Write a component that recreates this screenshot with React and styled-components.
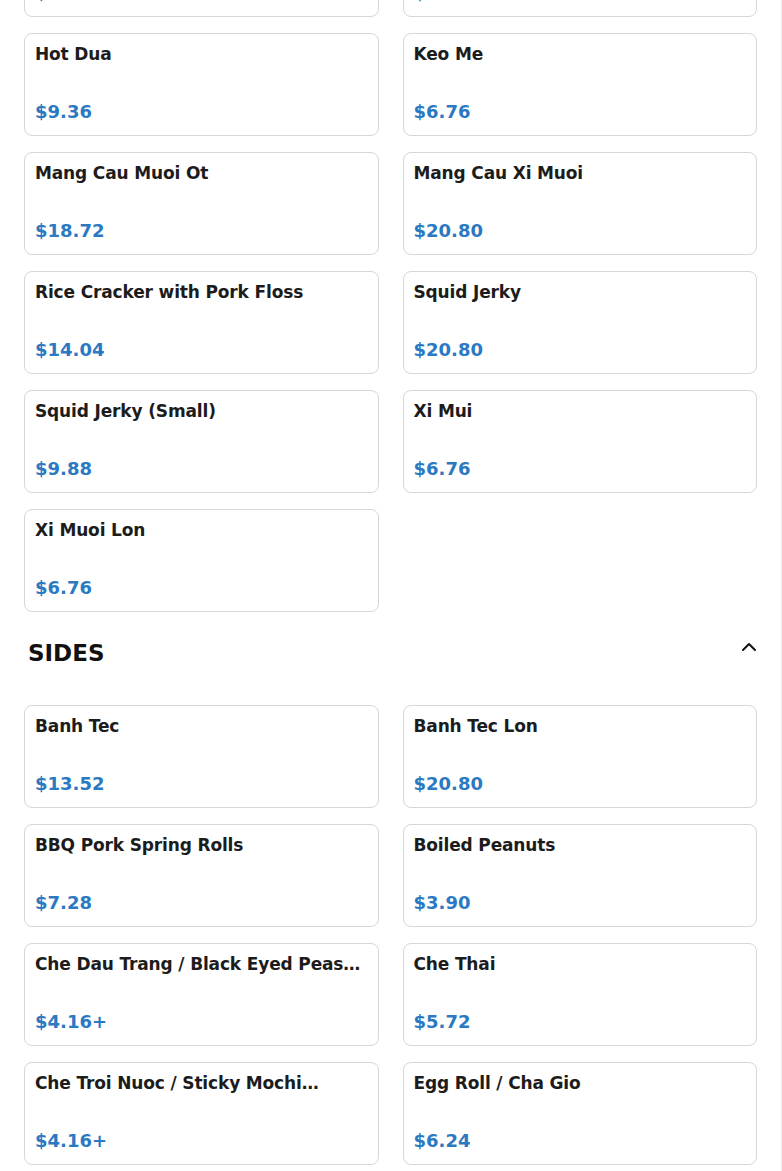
import styled, { createGlobalStyle } from 'styled-components';
import { ChevronUp } from 'lucide-react';

const GlobalStyle = createGlobalStyle`
  html, body {
    margin: 0;
    padding: 0;
    background: #ffffff;
  }
  body {
    font-family: "DejaVu Sans", "Liberation Sans", sans-serif;
    color: #1c1c1c;
  }
  * {
    box-sizing: border-box;
  }
`;

const StyledPage = styled.div`
  width: 782px;
  height: 1171px;
  overflow: hidden;
  border-right: 1px solid #ececec;
`;

const StyledMenu = styled.main`
  margin-top: -86px;
  padding: 0 24px;
`;

const StyledSection = styled.section`
  display: flex;
  flex-direction: column;
`;

const StyledSectionHeader = styled.header`
  display: flex;
  align-items: center;
  justify-content: space-between;
  padding: 15px 0 0 4px;
  margin: 0 -4px 38px 0;

  svg {
    color: #111;
    flex-shrink: 0;
  }
`;

const StyledSectionTitle = styled.h2`
  margin: 0;
  padding-top: 13px;
  font-size: 23px;
  line-height: 27px;
  font-weight: 700;
  color: #111;
`;

const StyledGrid = styled.div`
  display: grid;
  grid-template-columns: repeat(2, 1fr);
  column-gap: 24px;
  row-gap: 16px;
`;

const StyledCard = styled.article`
  height: 103px;
  display: flex;
  flex-direction: column;
  justify-content: space-between;
  padding: 9px 10px 12px;
  border: 1px solid #d6d6d6;
  border-radius: 8px;
  background: #fff;
  cursor: pointer;
`;

const StyledItemName = styled.h3`
  margin: 0;
  font-size: 17px;
  line-height: 22px;
  font-weight: 700;
  letter-spacing: -0.15px;
  color: #1c1c1c;
  display: -webkit-box;
  -webkit-line-clamp: 1;
  -webkit-box-orient: vertical;
  overflow: hidden;
`;

const StyledPrice = styled.span`
  font-size: 18px;
  line-height: 22px;
  font-weight: 700;
  color: #2b79c2;
`;

const sections = [
  {
    title: 'SNACKS',
    hideHeader: true,
    items: [
      { name: 'Ghe Rim', price: '$9.36' },
      { name: 'Kho Bo', price: '$20.80' },
      { name: 'Hot Dua', price: '$9.36' },
      { name: 'Keo Me', price: '$6.76' },
      { name: 'Mang Cau Muoi Ot', price: '$18.72' },
      { name: 'Mang Cau Xi Muoi', price: '$20.80' },
      { name: 'Rice Cracker with Pork Floss', price: '$14.04' },
      { name: 'Squid Jerky', price: '$20.80' },
      { name: 'Squid Jerky (Small)', price: '$9.88' },
      { name: 'Xi Mui', price: '$6.76' },
      { name: 'Xi Muoi Lon', price: '$6.76' },
    ],
  },
  {
    title: 'SIDES',
    items: [
      { name: 'Banh Tec', price: '$13.52' },
      { name: 'Banh Tec Lon', price: '$20.80' },
      { name: 'BBQ Pork Spring Rolls', price: '$7.28' },
      { name: 'Boiled Peanuts', price: '$3.90' },
      { name: 'Che Dau Trang / Black Eyed Peas Pudding', price: '$4.16+' },
      { name: 'Che Thai', price: '$5.72' },
      { name: 'Che Troi Nuoc / Sticky Mochi Dumplings', price: '$4.16+' },
      { name: 'Egg Roll / Cha Gio', price: '$6.24' },
    ],
  },
];

function MenuCard({ name, price }) {
  return (
    <StyledCard>
      <StyledItemName title={name}>{name}</StyledItemName>
      <StyledPrice>{price}</StyledPrice>
    </StyledCard>
  );
}

export default function App() {
  return (
    <StyledPage>
      <GlobalStyle />
      <StyledMenu>
        {sections.map((section) => (
          <StyledSection key={section.title}>
            {!section.hideHeader && (
              <StyledSectionHeader>
                <StyledSectionTitle>{section.title}</StyledSectionTitle>
                <ChevronUp size={24} strokeWidth={2} />
              </StyledSectionHeader>
            )}
            <StyledGrid>
              {section.items.map((item) => (
                <MenuCard key={item.name} name={item.name} price={item.price} />
              ))}
            </StyledGrid>
          </StyledSection>
        ))}
      </StyledMenu>
    </StyledPage>
  );
}
